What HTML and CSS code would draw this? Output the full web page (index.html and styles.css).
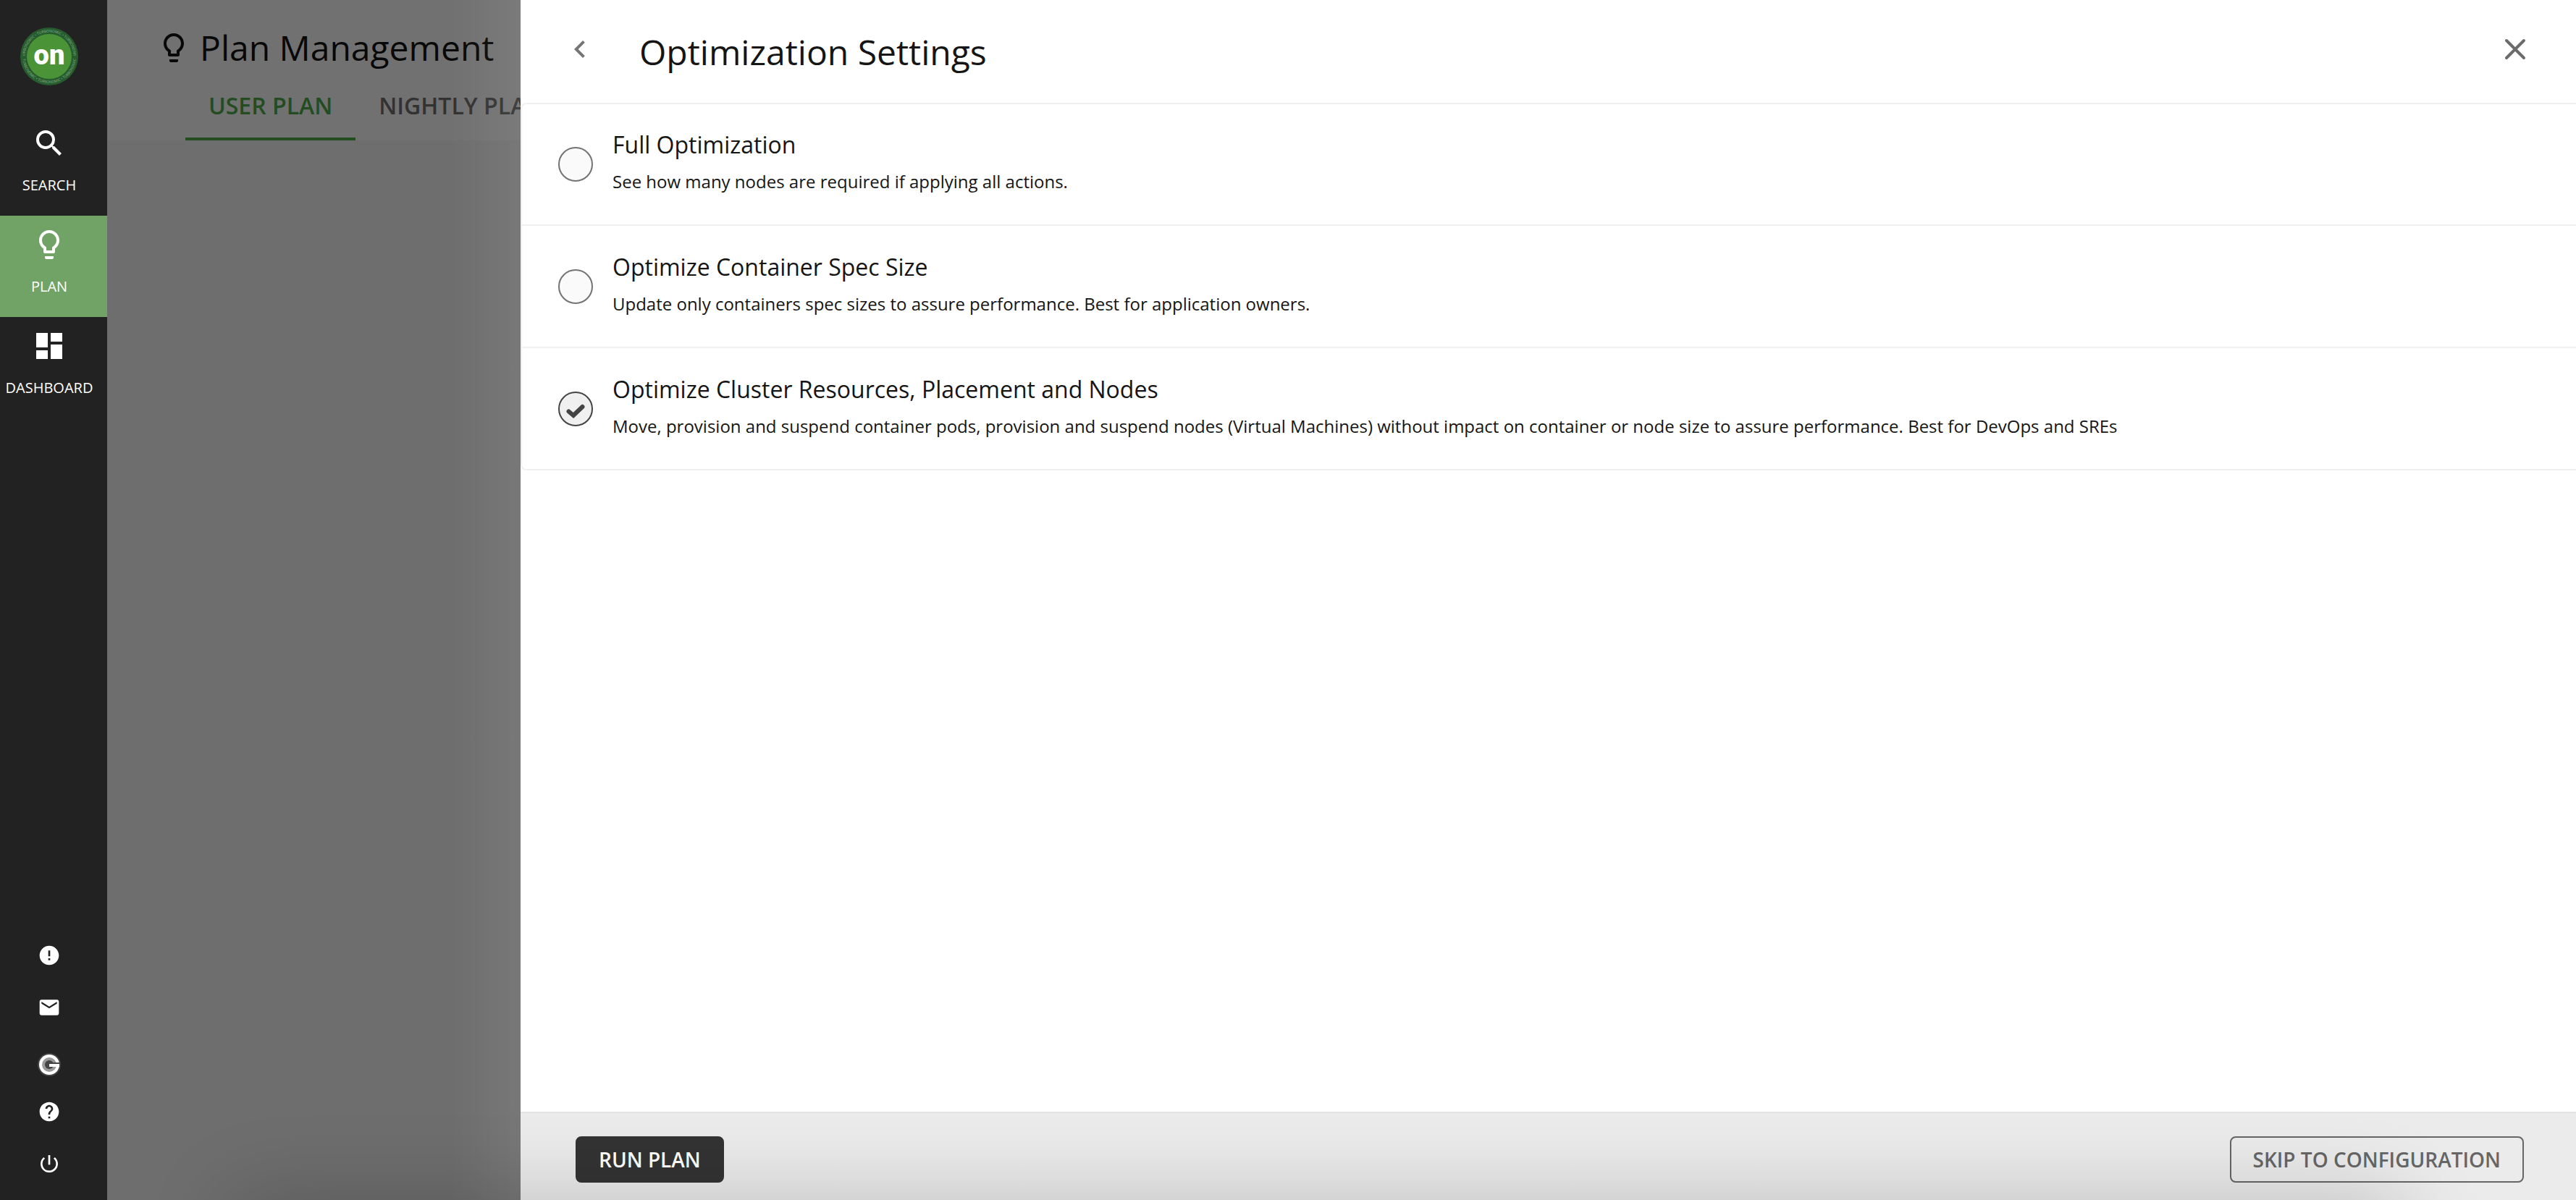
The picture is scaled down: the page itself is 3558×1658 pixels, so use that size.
FILE: index.html
```html
<!DOCTYPE html>
<html lang="en">
<head>
<meta charset="utf-8">
<title>Plan Management</title>
<link rel="stylesheet" href="styles.css">
</head>
<body>
<div class="app">
  <nav class="sidebar" aria-label="Main">
    <a class="logo" href="#home" aria-label="Home">
      <svg viewBox="0 0 80 80" width="80" height="80">
        <defs>
          <path id="ring-top" d="M6.5 40a33.500 33.500 0 0 1 67 0"/>
          <path id="ring-bottom" d="M3 40a37 37 0 0 0 74 0"/>
        </defs>
        <circle cx="40" cy="40" r="40" fill="#265c2e"/>
        <circle cx="40" cy="40" r="31" fill="#4b9337"/>
        <g class="ring-text">
          <text><textPath href="#ring-top" startOffset="50%">TURBONOMIC • TURBONOMIC • TURBONOMIC</textPath></text>
          <text><textPath href="#ring-bottom" startOffset="50%">TURBONOMIC • TURBONOMIC • TURBONOMIC</textPath></text>
        </g>
        <text class="logo-text" x="40" y="51">on</text>
      </svg>
    </a>
    <a class="nav-item" href="#search">
      <svg class="icon" viewBox="0 0 24 24"><path d="M15.500 14h-.79l-.28-.27A6.471 6.471 0 0 0 16 9.500 6.500 6.500 0 1 0 9.500 16c1.610 0 3.090-.59 4.230-1.570l.27.28v.79l5 4.990L20.490 19l-4.990-5zm-6 0C7.010 14 5 11.990 5 9.500S7.010 5 9.500 5 14 7.010 14 9.500 11.990 14 9.500 14z"/></svg>
      <span>SEARCH</span>
    </a>
    <a class="nav-item active" href="#plan" aria-current="page">
      <svg class="icon" viewBox="0 0 24 24"><path d="M9 21c0 .55.45 1 1 1h4c.55 0 1-.45 1-1v-1H9v1zm3-19C8.140 2 5 5.140 5 9c0 2.380 1.190 4.470 3 5.740V17c0 .55.45 1 1 1h6c.55 0 1-.45 1-1v-2.260c1.810-1.270 3-3.360 3-5.740 0-3.860-3.140-7-7-7zm2.850 11.100-.85.6V16h-4v-2.300l-.85-.6A4.997 4.997 0 0 1 7 9c0-2.760 2.240-5 5-5s5 2.240 5 5c0 1.630-.8 3.160-2.150 4.100z"/></svg>
      <span>PLAN</span>
    </a>
    <a class="nav-item" href="#dashboard">
      <svg class="icon" viewBox="0 0 24 24"><path d="M3 13h8V3H3v10zm0 8h8v-6H3v6zm10 0h8V11h-8v10zm0-18v6h8V3h-8z"/></svg>
      <span>DASHBOARD</span>
    </a>
    <div class="tools">
      <a class="tool" href="#alerts" aria-label="Alerts"><svg viewBox="0 0 24 24"><path d="M12 2C6.480 2 2 6.480 2 12s4.480 10 10 10 10-4.480 10-10S17.520 2 12 2zm1 15h-2v-2h2v2zm0-4h-2V7h2v6z"/></svg></a>
      <a class="tool" href="#mail" aria-label="Mail"><svg viewBox="0 0 24 24"><path d="M20 4H4c-1.100 0-2 .9-2 2v12c0 1.100.9 2 2 2h16c1.100 0 2-.9 2-2V6c0-1.100-.9-2-2-2zm0 4l-8 5-8-5V6l8 5 8-5v2z"/></svg></a>
      <a class="tool tool-brand" href="#community" aria-label="Community"><svg viewBox="0 0 32 32"><circle cx="16" cy="16" r="16" fill="#444"/><circle cx="16" cy="16" r="14"/><circle cx="16" cy="16" r="10" fill="#999"/><circle cx="16" cy="16" r="6" fill="#444"/><path d="M16 13h15v2H16z" fill="#444"/><path d="M16 15h14v4H16z"/></svg></a>
      <a class="tool" href="#help" aria-label="Help"><svg viewBox="0 0 24 24"><path d="M12 2C6.480 2 2 6.480 2 12s4.480 10 10 10 10-4.480 10-10S17.520 2 12 2zm1 17h-2v-2h2v2zm2.070-7.750-.9.92C13.450 12.900 13 13.500 13 15h-2v-.5c0-1.100.45-2.100 1.170-2.830l1.240-1.260c.37-.36.59-.86.59-1.410 0-1.100-.9-2-2-2s-2 .9-2 2H8c0-2.210 1.790-4 4-4s4 1.790 4 4c0 .88-.36 1.680-.93 2.250z"/></svg></a>
      <a class="tool" href="#logout" aria-label="Log out"><svg viewBox="0 0 24 24"><path d="M13 3h-2v10h2V3zm4.830 2.170-1.420 1.420A6.920 6.920 0 0 1 19 12c0 3.870-3.130 7-7 7A6.995 6.995 0 0 1 7.580 6.580L6.170 5.170A8.932 8.932 0 0 0 3 12a9 9 0 0 0 18 0c0-2.740-1.230-5.180-3.170-6.830z"/></svg></a>
    </div>
  </nav>

  <main class="page">
    <header class="page-header">
      <h1 class="page-title">
        <svg class="icon" viewBox="0 0 24 24"><path d="M9 21c0 .55.45 1 1 1h4c.55 0 1-.45 1-1v-1H9v1zm3-19C8.140 2 5 5.140 5 9c0 2.380 1.190 4.470 3 5.740V17c0 .55.45 1 1 1h6c.55 0 1-.45 1-1v-2.260c1.810-1.270 3-3.360 3-5.740 0-3.860-3.140-7-7-7zm2.850 11.100-.85.6V16h-4v-2.300l-.85-.6A4.997 4.997 0 0 1 7 9c0-2.760 2.240-5 5-5s5 2.240 5 5c0 1.630-.8 3.160-2.150 4.100z"/></svg>
        Plan Management
      </h1>
      <div class="tabs">
        <a class="tab selected" href="#user-plan">USER PLAN</a>
        <a class="tab" href="#nightly-plan">NIGHTLY PLAN</a>
      </div>
    </header>
  </main>
</div>

<section class="drawer" aria-label="Optimization Settings">
  <header class="drawer-header">
    <button class="icon-button" type="button" aria-label="Back"><svg class="icon" viewBox="0 0 24 24"><path d="M15.410 7.410 14 6l-6 6 6 6 1.410-1.410L10.830 12z"/></svg></button>
    <h2 class="drawer-title">Optimization Settings</h2>
    <button class="icon-button close" type="button" aria-label="Close"><svg class="icon" viewBox="0 0 48 48"><path d="M12 12 36 36M36 12 12 36" fill="none" stroke="#6b6b6b" stroke-width="4" stroke-linecap="round"/></svg></button>
  </header>

  <div class="options">
    <label class="option">
      <span class="mark"><input type="radio" name="mode" aria-describedby="full-note"></span>
      <span class="option-text">
        <span class="option-name">Full Optimization</span>
        <span class="option-note" id="full-note">See how many nodes are required if applying all actions.</span>
      </span>
    </label>
    <label class="option">
      <span class="mark"><input type="radio" name="mode" aria-describedby="spec-note"></span>
      <span class="option-text">
        <span class="option-name">Optimize Container Spec Size</span>
        <span class="option-note" id="spec-note">Update only containers spec sizes to assure performance. Best for application owners.</span>
      </span>
    </label>
    <label class="option">
      <span class="mark">
        <input type="radio" name="mode" aria-describedby="cluster-note" checked>
        <svg class="check" viewBox="0 0 48 48"><path d="M14.500 27.500 21 33 33.500 21" fill="none" stroke="#444" stroke-width="6" stroke-linecap="round"/></svg>
      </span>
      <span class="option-text">
        <span class="option-name">Optimize Cluster Resources, Placement and Nodes</span>
        <span class="option-note" id="cluster-note">Move, provision and suspend container pods, provision and suspend nodes (Virtual Machines) without impact on container or node size to assure performance. Best for DevOps and SREs</span>
      </span>
    </label>
  </div>

  <footer class="drawer-footer">
    <button class="button primary" type="button">RUN PLAN</button>
    <button class="button outline" type="button">SKIP TO CONFIGURATION</button>
  </footer>
</section>
<div class="bottom-shade"></div>
</body>
</html>
```
FILE: styles.css
```css
* {
  box-sizing: border-box;
}

body {
  margin: 0;
  overflow: hidden;
  font-family: "Open Sans", "Noto Sans", sans-serif;
  color: #151515;
}

.app {
  display: flex;
  min-height: 100vh;
}

.icon {
  display: block;
  width: 48px;
  height: 48px;
  fill: currentColor;
}

/* Left navigation */
.sidebar {
  display: flex;
  flex-direction: column;
  width: 148px;
  flex: none;
  background: #222;
}

.logo {
  height: 158px;
  padding: 38px 28px;
}

.logo svg {
  display: block;
}

.ring-text {
  font-size: 5px;
  fill: #86b088;
  text-anchor: middle;
}

.logo-text {
  font-family: Roboto, sans-serif;
  font-size: 38px;
  font-weight: 900;
  fill: #fff;
  text-anchor: middle;
}

.nav-item {
  display: flex;
  flex-direction: column;
  align-items: center;
  gap: 20px;
  height: 140px;
  padding: 16px 12px 0 0;
  color: #fff;
  font-size: 20px;
  line-height: 28px;
  text-decoration: none;
}

.nav-item.active {
  background: #71a366;
}

.tools {
  display: flex;
  flex-direction: column;
  margin-top: auto;
  padding: 0 12px 14px 0;
}

.tool {
  display: flex;
  align-items: center;
  justify-content: center;
  height: 72px;
}

.tool svg {
  width: 32px;
  height: 32px;
  fill: #fff;
}

.tool-brand {
  padding-top: 14px;
}

/* Dimmed page behind the drawer */
.page {
  flex: 1;
  background: #6e6e6e;
}

.page-header {
  padding: 28px 0 0 68px;
  background: #717171;
}

.page-title {
  display: flex;
  align-items: center;
  gap: 12px;
  margin: 0;
  font-size: 48px;
  font-weight: 400;
  line-height: 76px;
  color: #080808;
}

.tabs {
  display: flex;
  padding-left: 40px;
}

.tab {
  height: 90px;
  padding: 20px 32px;
  font-size: 32px;
  font-weight: 600;
  line-height: 44px;
  color: #323232;
  text-decoration: none;
}

.tab.selected {
  color: #234d20;
  border-bottom: 4px solid #234d20;
}

/* Drawer */
.drawer {
  position: fixed;
  inset: 0 0 0 719px;
  display: flex;
  flex-direction: column;
  background: #fff;
}

.drawer::before {
  content: "";
  position: absolute;
  inset: 0 100% 0 auto;
  width: 100px;
  background: linear-gradient(to right, rgba(255, 255, 255, 0), rgba(255, 255, 255, 0.07));
}

.drawer-header {
  display: flex;
  align-items: center;
  height: 142px;
  padding: 0 60px 6px 58px;
}

.icon-button {
  padding: 0;
  border: 0;
  background: none;
  color: #757575;
}

.drawer-title {
  flex: 1;
  margin: 0;
  padding: 8px 0 0 58px;
  font-size: 48px;
  font-weight: 400;
  line-height: 64px;
}

.options {
  border: 2px solid #f0f0f0;
  border-right: 0;
  border-radius: 8px 0 0 8px;
}

.option {
  display: flex;
  align-items: center;
  gap: 27px;
  height: 166px;
  padding-left: 50px;
}

.option + .option {
  height: 169px;
  border-top: 2px solid #f0f0f0;
}

.mark {
  display: grid;
  flex: none;
}

.mark > * {
  grid-area: 1 / 1;
  width: 48px;
  height: 48px;
}

.mark input {
  appearance: none;
  margin: 0;
  border: 2px solid #737373;
  border-radius: 50%;
  background: #fafafa;
}

.mark input:checked {
  border-color: #444;
  background: #f0f0f0;
}

.check {
  pointer-events: none;
}

.option-text {
  display: flex;
  flex-direction: column;
  gap: 12px;
  padding-bottom: 8px;
}

.option-name {
  font-size: 32px;
  line-height: 44px;
}

.option-note {
  font-size: 24px;
  line-height: 34px;
}

.drawer-footer {
  display: flex;
  justify-content: space-between;
  margin-top: auto;
  padding: 32px 72px 24px 76px;
  border-top: 2px solid #e3e3e3;
  background: #ebebeb;
}

.button {
  height: 64px;
  padding: 0 30px;
  border: 2px solid #333;
  border-radius: 8px;
  font-family: inherit;
  font-size: 28px;
  font-weight: 600;
}

.primary {
  background: #333;
  color: #fff;
}

.outline {
  border-color: #666;
  background: none;
  color: #666;
}

/* Soft shade rising from the window's lower edge */
.bottom-shade {
  position: fixed;
  top: 100%;
  right: 240px;
  left: 320px;
  height: 200px;
  box-shadow: 0 0 120px rgba(0, 0, 0, 0.2);
  pointer-events: none;
}
```
